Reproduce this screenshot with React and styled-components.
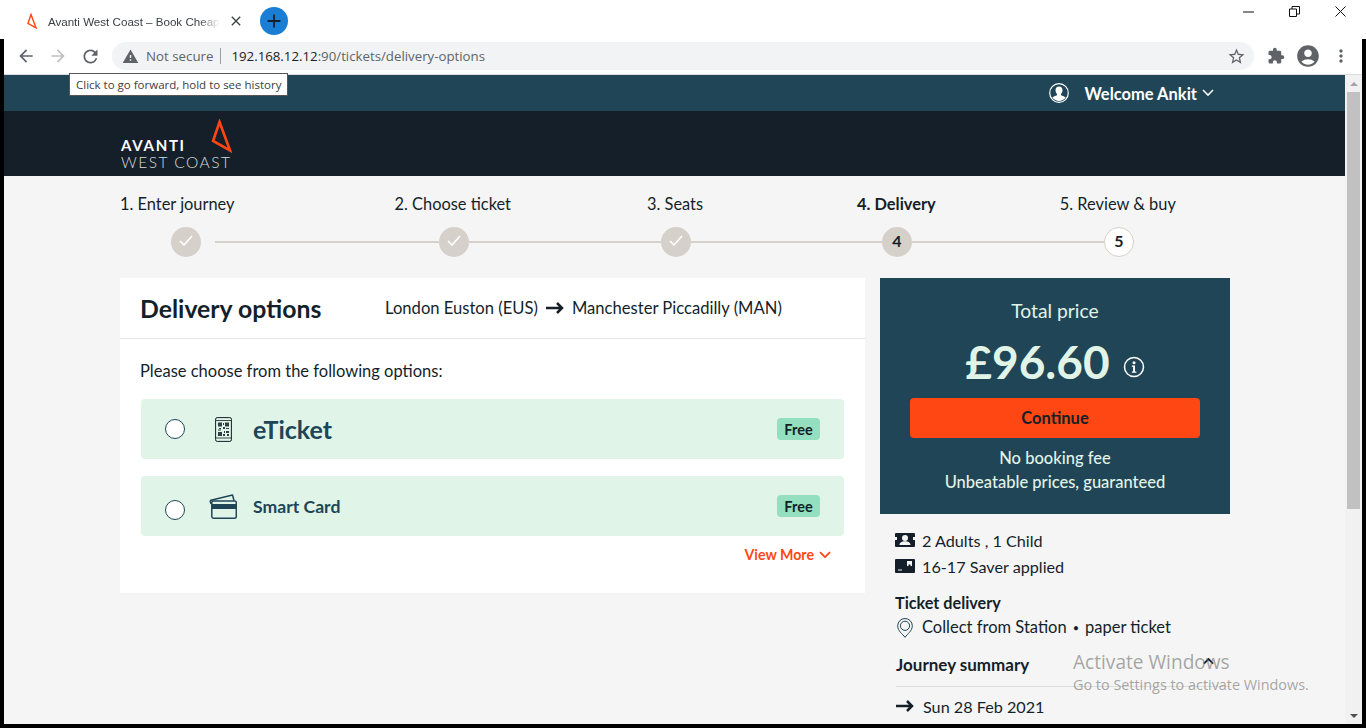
import React from "react";
import styled, { createGlobalStyle } from "styled-components";
import {
  MdArrowBack,
  MdArrowForward,
  MdRefresh,
  MdStarBorder,
  MdExtension,
  MdAccountCircle,
  MdMoreVert,
  MdWarning,
  MdClose,
  MdAdd,
} from "react-icons/md";

const teal = "#204557";
const navy = "#141f2a";
const orange = "#ff4713";
const mint = "#e0f4e8";
const stone = "#d5d0ca";
const font = `"Lato", "Open Sans", sans-serif`;
const uiFont = `"Open Sans", "Liberation Sans", sans-serif`;

const GlobalStyle = createGlobalStyle`
  html, body { margin: 0; padding: 0; background: #fff; overflow: hidden; }
  * { box-sizing: border-box; }
`;

function Triangle({ size = 34, stroke = 2.6 }) {
  return (
    <svg width={size * 0.62} height={size} viewBox="0 0 21 34" fill="none">
      <path d="M8.500 3 L19 31.500 L2 22 Z" stroke={orange} strokeWidth={stroke} />
    </svg>
  );
}

function Chevron({ up, width = 12, stroke = 1.5, color = "currentColor" }) {
  return (
    <svg width={width} height={width * 0.6} viewBox="0 0 12 7" fill="none">
      <path d={up ? "M1 6l5-5 5 5" : "M1 1l5 5 5-5"} stroke={color} strokeWidth={stroke} />
    </svg>
  );
}

function QrPhone() {
  return (
    <svg width="17" height="25" viewBox="0 0 17 25" fill="none">
      <rect x="0.600" y="0.600" width="15.800" height="23.800" rx="1.600" stroke={navy} strokeWidth="1" />
      <path d="M1 3.500H16M1 21H16" stroke={navy} strokeWidth="0.800" />
      <path
        d="M3 5.500h4v4H3zM10 5.500h4v4h-4zM3 15h4v4H3zM8 6h1v2H8zM4 11h2v1H4zM8 10h2v2H8zM11 11h3v1h-3zM9 14h1v2H9zM11 14h3v2h-3zM8 17h2v2H8zM12 17h2v2h-2zM3 12.500h3v1H3z"
        fill={navy}
        opacity="0.850"
      />
    </svg>
  );
}

function CardIcon() {
  return (
    <svg width="28" height="25" viewBox="0 0 28 25" fill="none">
      <path d="M1 6.500 L2 10 M1 6.500 L23.500 1 L25 6.500" stroke={teal} strokeWidth="1.500" strokeLinejoin="round" />
      <rect x="2.800" y="7" width="24.500" height="17.200" rx="1.600" stroke={teal} strokeWidth="1.500" fill={mint} />
      <rect x="2.800" y="10" width="24.500" height="5" fill={teal} />
    </svg>
  );
}

function PeopleIcon() {
  return (
    <svg width="20" height="14" viewBox="0 0 20 14">
      <path
        fillRule="evenodd"
        d="M1 0h18a1 1 0 0 1 1 1v12a1 1 0 0 1-1 1H1a1 1 0 0 1-1-1V1a1 1 0 0 1 1-1zM10 2a3 3 0 0 0-3 3 3 3 0 0 0 6 0 3 3 0 0 0-3-3zM4.500 12h11c0-2.600-2.400-3.800-5.500-3.800S4.500 9.400 4.500 12zM0 4v3h2V4zM18 4v3h2V4z"
        fill={navy}
      />
    </svg>
  );
}

function SaverIcon() {
  return (
    <svg width="20" height="14" viewBox="0 0 20 14">
      <path
        fillRule="evenodd"
        d="M1 0h18a1 1 0 0 1 1 1v12a1 1 0 0 1-1 1H1a1 1 0 0 1-1-1V1a1 1 0 0 1 1-1zM12 2v5h1.500V5.500h2V7H17V2zM3 10.500v1h4v-1z"
        fill={navy}
      />
    </svg>
  );
}

function PinIcon() {
  return (
    <svg width="16" height="20" viewBox="0 0 16 20" fill="none">
      <path d="M8 19.300C5.500 15.800.7 13 .7 7.800a7.300 7.300 0 0 1 14.600 0C15.300 13 10.500 15.800 8 19.300Z" stroke={teal} strokeWidth="1" />
      <circle cx="8" cy="7.800" r="4.600" stroke={teal} strokeWidth="1" />
    </svg>
  );
}

function InfoIcon() {
  return (
    <svg width="22" height="22" viewBox="0 0 22 22" fill="none">
      <circle cx="11" cy="11" r="9.500" stroke="#fff" strokeWidth="1.500" />
      <circle cx="11" cy="6.800" r="1.500" fill="#fff" />
      <path d="M8.800 9.500h3.200v6h1.400v1.300H8.800v-1.300h1.300v-4.700H8.800z" fill="#fff" />
    </svg>
  );
}

function RouteArrow() {
  return (
    <svg width="18" height="12" viewBox="0 0 18 12" fill="none">
      <path d="M0 6H16M11 1l5 5-5 5" stroke={navy} strokeWidth="2.500" />
    </svg>
  );
}

function CheckMark() {
  return (
    <svg width="14" height="11" viewBox="0 0 14 11" fill="none">
      <path d="M1 6l4 4 8-9" stroke="#fff" strokeWidth="1.600" />
    </svg>
  );
}

function UserBadge() {
  return (
    <svg width="20" height="20" viewBox="0 0 20 20" fill="none">
      <circle cx="10" cy="10" r="9.300" stroke="#fff" strokeWidth="1.200" />
      <path
        d="M10 3.500c2.300 0 3.500 1.700 3.500 3.800 0 1.500-.6 2.900-1.500 3.700v1.200c1.800.7 3.800 1.400 4.700 2.600a8.800 8.800 0 0 1-13.400 0c.9-1.200 2.900-1.900 4.700-2.600V11c-.9-.8-1.500-2.200-1.500-3.700 0-2.100 1.200-3.800 3.500-3.800z"
        fill="#fff"
      />
    </svg>
  );
}

function App() {
  return (
    <Screen>
      <GlobalStyle />
      <TabStrip>
        <Tab>
          <Triangle size={16} stroke={3} />
          <TabTitle>Avanti West Coast – Book Cheap Train Tickets</TabTitle>
          <MdClose size={16} color="#3c4043" />
        </Tab>
        <NewTab>
          <MdAdd size={22} color={navy} />
        </NewTab>
        <WindowControls>
          <svg width="11" height="11" viewBox="0 0 11 11">
            <path d="M0 6H11" stroke="#111" strokeWidth="1" />
          </svg>
          <svg width="11" height="11" viewBox="0 0 11 11" fill="none">
            <path d="M.5 3h7v7.500h-7zM3 3V.500h7.500V8H8" stroke="#111" strokeWidth="1" />
          </svg>
          <svg width="11" height="11" viewBox="0 0 11 11">
            <path d="M.5.500l10 10M10.500.500l-10 10" stroke="#111" strokeWidth="1" />
          </svg>
        </WindowControls>
      </TabStrip>
      <Frame>
        <Toolbar>
          <NavButtons>
            <MdArrowBack size={20} color="#5f6368" />
            <MdArrowForward size={20} color="#bdc1c6" />
            <MdRefresh size={21} color="#5f6368" />
          </NavButtons>
          <AddressBar>
            <MdWarning size={17} color="#5f6368" />
            <NotSecure>Not secure</NotSecure>
            <UrlText>
              <strong>192.168.12.12</strong>:90/tickets/delivery-options
            </UrlText>
            <MdStarBorder size={19} color="#5f6368" />
          </AddressBar>
          <ToolIcons>
            <MdExtension size={18} color="#5f6368" />
            <MdAccountCircle size={26} color="#5f6368" />
            <MdMoreVert size={20} color="#5f6368" />
          </ToolIcons>
        </Toolbar>
        <Tooltip>Click to go forward, hold to see history</Tooltip>
        <Viewport>
          <Page>
            <TopBar>
              <UserBadge />
              <Welcome>Welcome Ankit</Welcome>
              <Chevron />
            </TopBar>
            <BrandBar>
              <Logo>
                <LogoTop>
                  <LogoBold>AVANTI</LogoBold>
                  <Triangle size={34} />
                </LogoTop>
                <LogoLight>WEST COAST</LogoLight>
              </Logo>
            </BrandBar>
            <Steps>
              <StepLabels>
                <StepLabel $left={0}>1. Enter journey</StepLabel>
                <StepLabel $left={160}>2. Choose ticket</StepLabel>
                <StepLabel $left={136}>3. Seats</StepLabel>
                <StepLabel $left={154} $active>4. Delivery</StepLabel>
                <StepLabel $left={124}>5. Review &amp; buy</StepLabel>
              </StepLabels>
              <StepTrack>
                <StepDot><CheckMark /></StepDot>
                <StepLine $width={224} $left={14} />
                <StepDot><CheckMark /></StepDot>
                <StepLine $width={192} />
                <StepDot><CheckMark /></StepDot>
                <StepLine $width={191} />
                <StepDot>4</StepDot>
                <StepLine $width={192} />
                <StepDot $open>5</StepDot>
              </StepTrack>
            </Steps>
            <Main>
              <Card>
                <CardHead>
                  <Title>Delivery options</Title>
                  <Route>
                    London Euston (EUS)
                    <RouteArrow />
                    Manchester Piccadilly (MAN)
                  </Route>
                </CardHead>
                <CardBody>
                  <Prompt>Please choose from the following options:</Prompt>
                  <Option>
                    <Radio />
                    <OptionIcon><QrPhone /></OptionIcon>
                    <OptionName $large>eTicket</OptionName>
                    <Free>Free</Free>
                  </Option>
                  <Option>
                    <Radio $low />
                    <OptionIcon><CardIcon /></OptionIcon>
                    <OptionName>Smart Card</OptionName>
                    <Free>Free</Free>
                  </Option>
                  <ViewMore>
                    View More
                    <Chevron stroke={1.800} />
                  </ViewMore>
                </CardBody>
              </Card>
              <Side>
                <PricePanel>
                  <PriceLabel>Total price</PriceLabel>
                  <PriceRow>
                    <Price>£96.60</Price>
                    <InfoIcon />
                  </PriceRow>
                  <ContinueButton>Continue</ContinueButton>
                  <PriceNote>No booking fee</PriceNote>
                  <PriceNote>Unbeatable prices, guaranteed</PriceNote>
                </PricePanel>
                <Summary>
                  <SummaryRow>
                    <PeopleIcon />
                    2 Adults , 1 Child
                  </SummaryRow>
                  <SummaryRow>
                    <SaverIcon />
                    16-17 Saver applied
                  </SummaryRow>
                  <SummaryHeading>Ticket delivery</SummaryHeading>
                  <DeliveryRow>
                    <PinIcon />
                    <span>
                      Collect from Station<Bullet>•</Bullet>paper ticket
                    </span>
                  </DeliveryRow>
                  <JourneyHead>
                    Journey summary
                    <Chevron up width={11} stroke={2} />
                  </JourneyHead>
                  <JourneyDate>
                    <RouteArrow />
                    Sun 28 Feb 2021
                  </JourneyDate>
                </Summary>
              </Side>
            </Main>
          </Page>
          <Scrollbar>
            <ScrollArrow $up />
            <ScrollThumb />
            <ScrollArrow />
          </Scrollbar>
        </Viewport>
      </Frame>
      <Watermark>
        <WatermarkTitle>Activate Windows</WatermarkTitle>
        <WatermarkText>Go to Settings to activate Windows.</WatermarkText>
      </Watermark>
    </Screen>
  );
}

const Screen = styled.div`
  position: relative;
  width: 1366px;
  height: 728px;
  overflow: hidden;
  display: flex;
  flex-direction: column;
  background: #fff;
  font-family: ${font};
  color: ${navy};
`;

const TabStrip = styled.div`
  height: 39px;
  flex: none;
  display: flex;
  align-items: center;
  padding-left: 27px;
`;

const Tab = styled.div`
  display: flex;
  align-items: center;
  width: 217px;
  height: 100%;
  padding-top: 3px;
`;

const TabTitle = styled.div`
  width: 172px;
  margin: 0 8px 0 11px;
  font: 11.600px "Liberation Sans", sans-serif;
  color: #3c4043;
  white-space: nowrap;
  overflow: hidden;
  -webkit-mask-image: linear-gradient(90deg, #000 88%, transparent);
  mask-image: linear-gradient(90deg, #000 88%, transparent);
`;

const NewTab = styled.div`
  width: 28px;
  height: 28px;
  margin: 3px 0 0 16px;
  border-radius: 50%;
  background: #1a7fd4;
  display: flex;
  align-items: center;
  justify-content: center;
`;

const WindowControls = styled.div`
  margin-left: auto;
  margin-right: 20px;
  margin-bottom: 17px;
  display: flex;
  gap: 35px;
`;

const Frame = styled.div`
  position: relative;
  flex: 1;
  min-height: 0;
  display: flex;
  flex-direction: column;
  border-left: 4px solid #000;
  border-right: 4px solid #000;
  border-bottom: 4px solid #000;
`;

const Toolbar = styled.div`
  height: 36px;
  flex: none;
  display: flex;
  align-items: center;
  border-bottom: 1px solid #dadce0;
  padding-bottom: 1px;
`;

const NavButtons = styled.div`
  width: 108px;
  display: flex;
  padding-left: 12px;
  gap: 12px;
`;

const AddressBar = styled.div`
  width: 1142px;
  height: 28px;
  display: flex;
  align-items: center;
  padding: 0 8px 0 10px;
  border-radius: 14px;
  background: #f1f3f4;
  font: 14px ${uiFont};
`;

const NotSecure = styled.span`
  margin-left: 7px;
  padding-right: 7px;
  font-size: 13.300px;
  line-height: 16px;
  color: #5f6368;
  border-right: 1px solid #9aa0a6;
`;

const UrlText = styled.span`
  flex: 1;
  margin-left: 10px;
  font-size: 13.250px;
  color: #5f6368;
  strong {
    font-weight: 400;
    color: #202124;
  }
`;

const ToolIcons = styled.div`
  display: flex;
  align-items: center;
  gap: 10px;
  margin-left: 13px;
`;

const Tooltip = styled.div`
  position: absolute;
  left: 65px;
  top: 34px;
  z-index: 3;
  height: 23px;
  padding: 0 6px 0 6px;
  width: 219px;
  display: flex;
  align-items: center;
  background: #fff;
  border: 1px solid #555;
  font: 11.500px ${uiFont};
  color: #3c4043;
  white-space: nowrap;
`;

const Viewport = styled.div`
  flex: 1;
  min-height: 0;
  display: flex;
`;

const Page = styled.div`
  flex: 1;
  min-width: 0;
  overflow: hidden;
  background: #f5f5f5;
`;

const TopBar = styled.div`
  height: 36px;
  padding-right: 131px;
  display: flex;
  align-items: center;
  justify-content: flex-end;
  background: ${teal};
  color: #fff;
`;

const Welcome = styled.span`
  margin: 1px 5px 0 15px;
  font-size: 16.500px;
  font-weight: 700;
`;

const BrandBar = styled.div`
  height: 65px;
  padding: 8px 0 0 117px;
  background: ${navy};
`;

const Logo = styled.div`
  width: 111px;
  color: #fff;
`;

const LogoTop = styled.div`
  display: flex;
  justify-content: space-between;
  align-items: flex-end;
  height: 34px;
`;

const LogoBold = styled.span`
  font-size: 15px;
  line-height: 15px;
  font-weight: 700;
  letter-spacing: 1.700px;
`;

const LogoLight = styled.div`
  font-size: 15.500px;
  line-height: 18px;
  font-weight: 300;
  letter-spacing: 1.500px;
  white-space: nowrap;
  color: #d8dbdd;
`;

const Steps = styled.div`
  padding: 16px 0 0 116px;
  height: 102px;
`;

const StepLabels = styled.div`
  display: flex;
  height: 22px;
  align-items: center;
`;

const StepLabel = styled.span`
  margin-left: ${(p) => p.$left}px;
  font-size: 16.400px;
  font-weight: ${(p) => (p.$active ? 700 : 400)};
  white-space: nowrap;
`;

const StepTrack = styled.div`
  display: flex;
  align-items: center;
  margin: 13px 0 0 51px;
`;

const StepDot = styled.div`
  width: 30px;
  height: 30px;
  flex: none;
  padding-bottom: 3px;
  border-radius: 50%;
  display: flex;
  align-items: center;
  justify-content: center;
  font-size: 16px;
  font-weight: 700;
  background: ${(p) => (p.$open ? "#fff" : stone)};
  border: ${(p) => (p.$open ? `1px solid ${stone}` : "none")};
`;

const StepLine = styled.div`
  width: ${(p) => p.$width}px;
  margin-left: ${(p) => p.$left || 0}px;
  height: 2px;
  background: ${stone};
`;

const Main = styled.div`
  display: flex;
  align-items: flex-start;
  gap: 15px;
  padding-left: 116px;
`;

const Card = styled.div`
  width: 745px;
  background: #fff;
`;

const CardHead = styled.div`
  height: 61px;
  display: flex;
  align-items: center;
  padding: 0 20px;
  border-bottom: 1px solid #e6e6e6;
`;

const Title = styled.h1`
  width: 245px;
  flex: none;
  margin: 0;
  font-size: 24.800px;
  font-weight: 700;
`;

const Route = styled.div`
  display: flex;
  align-items: center;
  gap: 8px;
  font-size: 16.600px;
`;

const CardBody = styled.div`
  height: 254px;
  padding: 20px 21px 0;
`;

const Prompt = styled.p`
  margin: 0 0 16px -1px;
  height: 24px;
  line-height: 24px;
  font-size: 16.500px;
`;

const Option = styled.div`
  height: 60px;
  margin-bottom: 17px;
  padding: 0 24px;
  display: flex;
  align-items: center;
  border-radius: 4px;
  background: ${mint};
`;

const Radio = styled.span`
  flex: none;
  width: 20px;
  height: 20px;
  margin-top: ${(p) => (p.$low ? 8 : 0)}px;
  border-radius: 50%;
  background: #fff;
  border: 1px solid ${teal};
`;

const OptionIcon = styled.span`
  width: 68px;
  padding-left: 8px;
  display: flex;
  justify-content: center;
`;

const OptionName = styled.span`
  font-size: ${(p) => (p.$large ? 25 : 17.600)}px;
  font-weight: 700;
  color: ${teal};
`;

const Free = styled.span`
  margin-left: auto;
  width: 43px;
  height: 22px;
  display: flex;
  align-items: center;
  justify-content: center;
  border-radius: 4px;
  background: #93dfc0;
  font-size: 14.500px;
  font-weight: 700;
`;

const ViewMore = styled.div`
  margin: -7px 13px 0 0;
  display: flex;
  align-items: center;
  justify-content: flex-end;
  gap: 5px;
  color: ${orange};
  font-size: 14.200px;
  font-weight: 700;
`;

const Side = styled.div`
  width: 350px;
  flex: none;
`;

const PricePanel = styled.div`
  height: 236px;
  padding: 19px 30px 0;
  display: flex;
  flex-direction: column;
  align-items: center;
  background: ${teal};
  color: ${mint};
`;

const PriceLabel = styled.div`
  height: 27px;
  line-height: 27px;
  font-size: 19.300px;
`;

const PriceRow = styled.div`
  height: 60px;
  margin-top: 7px;
  display: flex;
  align-items: center;
  gap: 13px;
  svg {
    margin-top: 11px;
  }
`;

const Price = styled.div`
  font-size: 46px;
  font-weight: 700;
`;

const ContinueButton = styled.button`
  width: 290px;
  height: 40px;
  flex: none;
  margin: 7px 0 8px;
  border: 0;
  border-radius: 4px;
  background: ${orange};
  color: ${navy};
  font: 700 16.500px ${font};
`;

const PriceNote = styled.div`
  height: 24px;
  line-height: 24px;
  font-size: 16.500px;
  font-weight: 500;
`;

const Summary = styled.div`
  padding: 13px 0 0 15px;
  font-size: 16.200px;
`;

const SummaryRow = styled.div`
  height: 26px;
  display: flex;
  align-items: center;
  gap: 7px;
`;

const DeliveryRow = styled(SummaryRow)`
  gap: 9px;
  padding-left: 2px;
  font-size: 16.500px;
  svg {
    margin-top: 2px;
  }
`;

const Bullet = styled.span`
  margin: 0 6px;
  font-size: 11px;
  vertical-align: 1px;
`;

const SummaryHeading = styled.div`
  height: 23px;
  margin-top: 12px;
  line-height: 24px;
  font-weight: 700;
`;

const JourneyHead = styled.div`
  height: 38px;
  margin: 9px 0 0 1px;
  padding: 0 16px 6px 0;
  display: flex;
  align-items: center;
  justify-content: space-between;
  font-weight: 700;
  font-size: 17px;
  border-bottom: 1px solid #dcdcdc;
  svg {
    margin-top: -6px;
  }
`;

const JourneyDate = styled.div`
  height: 38px;
  margin-left: 1px;
  display: flex;
  align-items: center;
  gap: 9px;
`;

const Scrollbar = styled.div`
  width: 17px;
  flex: none;
  display: flex;
  flex-direction: column;
  background: #f1f1f1;
`;

const ScrollArrow = styled.div`
  height: 17px;
  flex: none;
  display: flex;
  align-items: center;
  justify-content: center;
  &::before {
    content: "";
    border-left: 4px solid transparent;
    border-right: 4px solid transparent;
    ${(p) => (p.$up ? "border-bottom: 4px solid #a3a3a3;" : "border-top: 4px solid #505050;")}
  }
`;

const ScrollThumb = styled.div`
  height: 417px;
  margin: 0 2px auto;
  background: #c1c1c1;
`;

const Watermark = styled.div`
  position: absolute;
  left: 1073px;
  top: 649px;
  z-index: 4;
  font-family: ${uiFont};
  color: rgba(110, 110, 110, 0.6);
  white-space: nowrap;
  pointer-events: none;
`;

const WatermarkTitle = styled.div`
  font-size: 19.100px;
  line-height: 26px;
`;

const WatermarkText = styled.div`
  font-size: 14.400px;
  line-height: 20px;
`;

export default App;
